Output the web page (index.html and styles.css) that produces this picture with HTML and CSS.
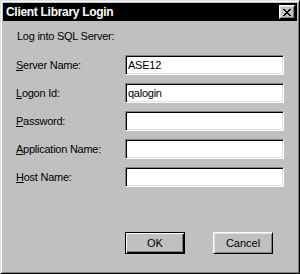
FILE: index.html
```html
<!DOCTYPE html>
<html>
<head>
<meta charset="utf-8">
<link rel="stylesheet" href="styles.css">
</head>
<body>
<div class="window">
  <div class="titlebar">
    <span class="title">Client Library Login</span>
    <button class="close" aria-label="Close">
      <svg width="8" height="7" viewBox="0 0 8 7" shape-rendering="crispEdges"><path fill="#000" d="M0 0h2v1h-2z M6 0h2v1h-2z M1 1h2v1h-2z M5 1h2v1h-2z M2 2h4v1h-4z M3 3h2v1h-2z M2 4h4v1h-4z M1 5h2v1h-2z M5 5h2v1h-2z M0 6h2v1h-2z M6 6h2v1h-2z"/></svg>
    </button>
  </div>
  <div class="content">
    <div class="heading">Log into SQL Server:</div>
    <div class="form">
      <label class="label"><u>S</u>erver Name:</label>
      <input class="field" type="text" value="ASE12">
      <label class="label"><u>L</u>ogon Id:</label>
      <input class="field" type="text" value="qalogin">
      <label class="label"><u>P</u>assword:</label>
      <input class="field" type="password" value="">
      <label class="label"><u>A</u>pplication Name:</label>
      <input class="field" type="text" value="">
      <label class="label"><u>H</u>ost Name:</label>
      <input class="field" type="text" value="">
    </div>
    <div class="buttons">
      <button class="btn btn-default">OK</button>
      <button class="btn">Cancel</button>
    </div>
  </div>
</div>
</body>
</html>
```

FILE: styles.css
```css
* { box-sizing: border-box; }
html, body { margin: 0; padding: 0; background: #c0c0c0; }
body {
  font-family: "Liberation Sans", Arial, sans-serif;
  font-size: 11px;
  color: #000;
}
.window {
  width: 300px;
  height: 274px;
  background: #c0c0c0;
  border: 1px solid;
  border-color: #dfdfdf #000 #000 #dfdfdf;
  box-shadow: inset 1px 1px #fff, inset -1px -1px #808080;
  padding: 2px;
}
.titlebar {
  height: 18px;
  background: #000;
  display: flex;
  align-items: center;
  justify-content: space-between;
  padding: 0 2px 0 3px;
}
.title {
  color: #fff;
  font-weight: bold;
  font-size: 12px;
  letter-spacing: -0.3px;
  line-height: 14px;
}
.close {
  width: 16px;
  height: 14px;
  padding: 0 0 0 0;
  margin: 0;
  background: #c0c0c0;
  border: 1px solid;
  border-color: #fff #000 #000 #fff;
  box-shadow: inset 1px 1px #dfdfdf, inset -1px -1px #808080;
  display: flex;
  align-items: center;
  justify-content: center;
}
.close svg { display: block; }
.content {
  padding: 9px 0 0 13px;
}
.heading {
  line-height: 13px;
  margin-left: 1px;
  letter-spacing: -0.25px;
}
.form {
  margin-top: 12px;
  display: grid;
  grid-template-columns: 109px 159px;
  grid-auto-rows: 20px;
  row-gap: 8px;
  align-items: center;
}
.label {
  letter-spacing: -0.25px;
  line-height: 13px;
}
.field {
  width: 159px;
  height: 20px;
  margin: 0;
  padding: 0 2px;
  background: #fff;
  border: 1px solid;
  border-color: #808080 #fff #fff #808080;
  box-shadow: inset 1px 1px #000, inset -1px -1px #dfdfdf;
  font-family: "Liberation Sans", Arial, sans-serif;
  font-size: 11px;
  letter-spacing: -0.25px;
  color: #000;
  outline: none;
}
.buttons {
  margin-top: 45px;
  padding-left: 109px;
  display: flex;
  gap: 28px;
}
.btn {
  width: 60px;
  height: 22px;
  margin: 0;
  padding: 0;
  background: #c0c0c0;
  border: 1px solid;
  border-color: #fff #000 #000 #fff;
  box-shadow: inset 1px 1px #dfdfdf, inset -1px -1px #808080;
  font-family: "Liberation Sans", Arial, sans-serif;
  font-size: 11px;
  color: #000;
}
.btn-default {
  border-color: #000;
  box-shadow: inset 1px 1px #fff, inset -1px -1px #000, inset -2px -2px #808080;
}
```
